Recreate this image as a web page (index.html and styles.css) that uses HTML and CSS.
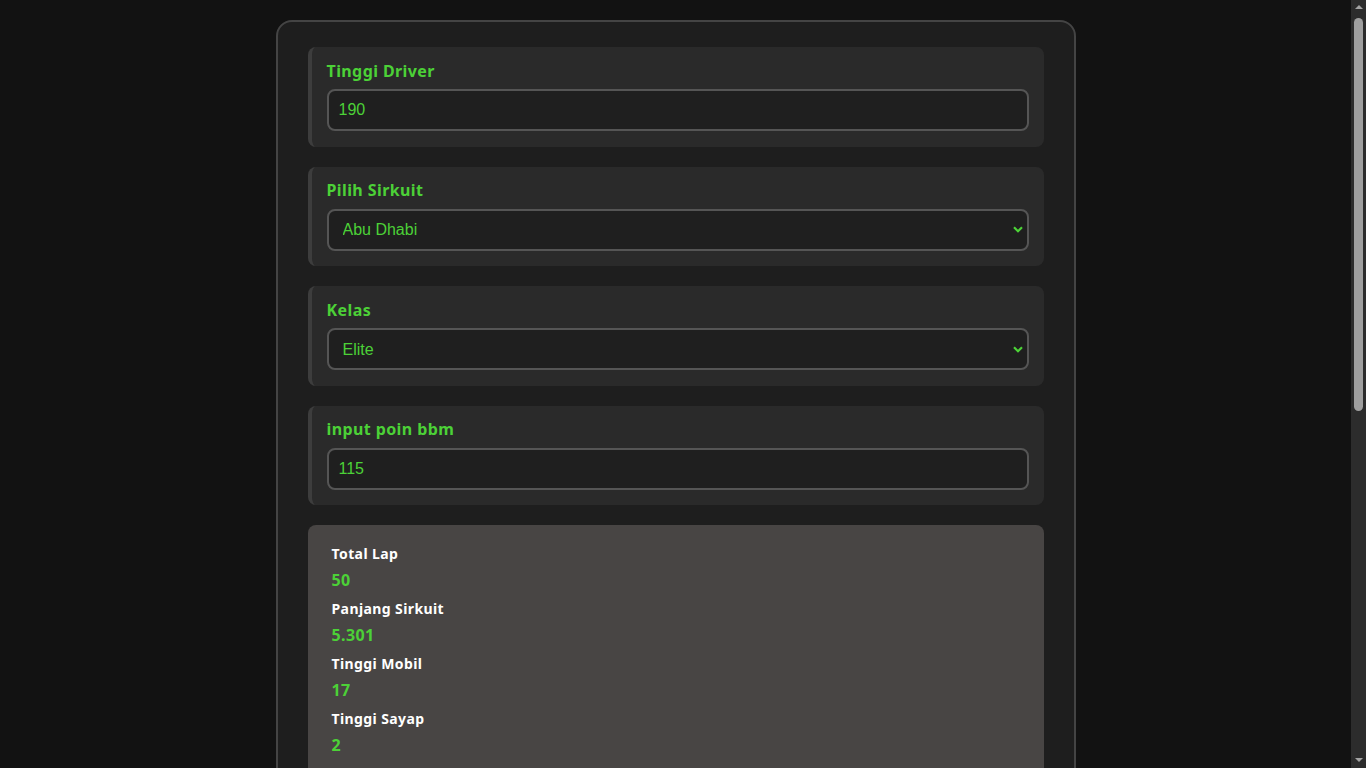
FILE: index.html
```html
<!DOCTYPE html>
<html lang="id">
<head>
<meta charset="utf-8">
<title>Kalkulator Setup</title>
<link rel="stylesheet" href="styles.css">
</head>
<body>
<div class="container">
  <div class="field">
    <label class="field-label" for="tinggi">Tinggi Driver</label>
    <input class="control" id="tinggi" type="text" value="190">
  </div>
  <div class="field">
    <label class="field-label" for="sirkuit">Pilih Sirkuit</label>
    <select class="control select" id="sirkuit">
      <option>Abu Dhabi</option>
    </select>
  </div>
  <div class="field">
    <label class="field-label" for="kelas">Kelas</label>
    <select class="control select" id="kelas">
      <option>Elite</option>
    </select>
  </div>
  <div class="field">
    <label class="field-label" for="bbm">input poin bbm</label>
    <input class="control" id="bbm" type="text" value="115">
  </div>
  <div class="result">
    <div class="row"><div class="r-label">Total Lap</div><div class="r-value">50</div></div>
    <div class="row"><div class="r-label">Panjang Sirkuit</div><div class="r-value">5.301</div></div>
    <div class="row"><div class="r-label">Tinggi Mobil</div><div class="r-value">17</div></div>
    <div class="row"><div class="r-label">Tinggi Sayap</div><div class="r-value">2</div></div>
  </div>
</div>
<div class="scrollbar" aria-hidden="true">
  <div class="sb-arrow sb-up"></div>
  <div class="sb-thumb"></div>
  <div class="sb-arrow sb-down"></div>
</div>
</body>
</html>
```
FILE: styles.css
```css
html, body {
  margin: 0;
  background: #121212;
}
body {
  padding: 20px 15px 40px 0;
  font-family: "Noto Sans", "Open Sans", sans-serif;
}
.container {
  box-sizing: border-box;
  width: 800px;
  margin: 0 auto;
  padding: 25px 30px 30px;
  background: #1e1e1e;
  border: 2px solid #444;
  border-radius: 16px;
  display: flex;
  flex-direction: column;
  gap: 20px;
  min-height: 1360px;
}
.field {
  background: #2a2a2a;
  border-left: 4px solid #3d3d3d;
  border-radius: 8px;
  padding: 13.5px 15px 15.5px;
  display: flex;
  flex-direction: column;
}
.field-label {
  color: #4cd137;
  font-weight: 700;
  font-size: 16px;
  line-height: 21px;
  letter-spacing: 0.4px;
  margin-bottom: 7.5px;
}
.control {
  box-sizing: border-box;
  height: 42px;
  width: 100%;
  background: #1f1f1f;
  border: 2px solid #555;
  border-radius: 8px;
  color: #4cd137;
  font-family: "Liberation Sans", Arial, sans-serif;
  font-size: 16px;
  padding: 0 10px;
  outline: none;
}
.select {
  appearance: none;
  -webkit-appearance: none;
  padding-left: 14px;
  background-image: url("data:image/svg+xml,%3Csvg xmlns='http://www.w3.org/2000/svg' width='10' height='7' viewBox='0 0 10 7'%3E%3Cpath d='M1 1.2l4 4 4-4' fill='none' stroke='%234cd137' stroke-width='2.2'/%3E%3C/svg%3E");
  background-repeat: no-repeat;
  background-position: right 4px center;
}
.result {
  background: #484544;
  border-radius: 8px;
  padding: 19px 24px 24px;
  flex: 1;
  display: flex;
  flex-direction: column;
  gap: 8px;
}
.row {
  display: flex;
  flex-direction: column;
  gap: 6px;
}
.r-label {
  color: #fff;
  font-weight: 700;
  font-size: 14px;
  line-height: 20px;
  letter-spacing: 0.4px;
}
.r-value {
  color: #4cd137;
  font-weight: 700;
  font-size: 16px;
  line-height: 21px;
  letter-spacing: 0.4px;
}

/* browser scrollbar as seen in the reference */
.scrollbar {
  position: fixed;
  top: 0;
  right: 0;
  width: 15px;
  height: 100vh;
  background: #2c2c2c;
  display: flex;
  flex-direction: column;
  align-items: center;
}
.sb-arrow {
  width: 0;
  height: 0;
  border-left: 4px solid transparent;
  border-right: 4px solid transparent;
}
.sb-up {
  margin-top: 5px;
  border-bottom: 4px solid #a3a3a3;
}
.sb-down {
  margin-top: auto;
  margin-bottom: 6px;
  border-top: 4px solid #a3a3a3;
}
.sb-thumb {
  margin-top: 9px;
  width: 9px;
  height: 393px;
  border-radius: 5px;
  background: #9f9f9f;
}
```
